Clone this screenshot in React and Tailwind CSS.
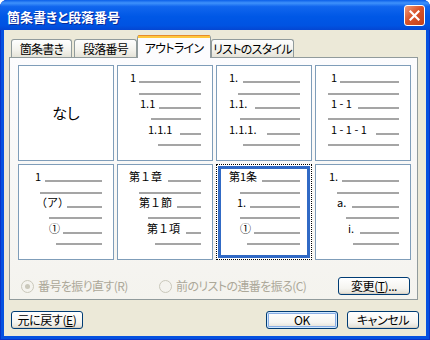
const heights = ["h-[17px]", "h-[12px]", "h-[14px]", "h-[11px]", "h-[15px]", "h-[11px]"]
const selHeights = ["h-[13px]", "h-[12px]", "h-[14px]", "h-[11px]", "h-[15px]", "h-[11px]"]

const cells = [
  { none: true },
  {
    rows: [
      { pl: "pl-[12px]", label: "1", w: "w-[9px]" },
      { pl: "pl-[21px]" },
      { pl: "pl-[22px]", label: "1.1", w: "w-[19px]" },
      { pl: "pl-[33px]" },
      { pl: "pl-[30px]", label: "1.1.1", w: "w-[32px]" },
      { pl: "pl-[40px]" },
    ],
  },
  {
    rows: [
      { pl: "pl-[12px]", label: "1.", w: "w-[14px]" },
      { pl: "pl-[21px]" },
      { pl: "pl-[12px]", label: "1.1.", w: "w-[26px]" },
      { pl: "pl-[23px]" },
      { pl: "pl-[12px]", label: "1.1.1.", w: "w-[38px]" },
      { pl: "pl-[26px]" },
    ],
  },
  {
    rows: [
      { pl: "pl-[15px]", label: "1", w: "w-[9px]" },
      { pl: "pl-[12px]" },
      { pl: "pl-[15px]", label: "1 - 1", w: "w-[27px]" },
      { pl: "pl-[12px]" },
      { pl: "pl-[15px]", label: "1 - 1 - 1", w: "w-[45px]" },
      { pl: "pl-[12px]" },
    ],
  },
  {
    rows: [
      { pl: "pl-[16px]", label: "1", w: "w-[10px]" },
      { pl: "pl-[21px]" },
      { pl: "pl-[17px]", label: "（ア）", w: "w-[31px]" },
      { pl: "pl-[30px]" },
      { pl: "pl-[30px]", label: "①", w: "w-[14px]" },
      { pl: "pl-[37px]" },
    ],
  },
  {
    rows: [
      { pl: "pl-[11px]", label: "第１章", w: "w-[39px]" },
      { pl: "pl-[21px]" },
      { pl: "pl-[21px]", label: "第１節", w: "w-[38px]" },
      { pl: "pl-[30px]" },
      { pl: "pl-[29px]", label: "第１項", w: "w-[39px]" },
      { pl: "pl-[37px]" },
    ],
  },
  {
    selected: true,
    rows: [
      { pl: "pl-[8px]", label: "第1条", w: "w-[33px]" },
      { pl: "pl-[19px]" },
      { pl: "pl-[16px]", label: "1.", w: "w-[13px]" },
      { pl: "pl-[19px]" },
      { pl: "pl-[19px]", label: "①", w: "w-[14px]" },
      { pl: "pl-[26px]" },
    ],
  },
  {
    rows: [
      { pl: "pl-[13px]", label: "1.", w: "w-[13px]" },
      { pl: "pl-[21px]" },
      { pl: "pl-[21px]", label: "a.", w: "w-[15px]" },
      { pl: "pl-[30px]" },
      { pl: "pl-[32px]", label: "i.", w: "w-[12px]" },
      { pl: "pl-[37px]" },
    ],
  },
]

function Lines({ rows, selected }) {
  const hs = selected ? selHeights : heights
  return (
    <div className={`flex flex-col ${selected ? "pr-[7px]" : "pr-[11px]"}`}>
      {rows.map((r, i) => (
        <div key={i} className={`flex items-end ${hs[i]} ${r.pl}`}>
          {r.label && (
            <span className={`${r.w} shrink-0 whitespace-nowrap text-[11px] leading-none text-black [font-feature-settings:normal]`}>
              {r.label}
            </span>
          )}
          <div className="h-[2px] flex-1 bg-[#a5a5a5]" />
        </div>
      ))}
    </div>
  )
}

function Cell({ cell }) {
  if (cell.none) {
    return (
      <div className="flex items-center justify-center border border-[#7f9db9] bg-white text-[15px] text-black">
        なし
      </div>
    )
  }
  if (cell.selected) {
    return (
      <div className="border border-dotted border-black bg-white p-[1px]">
        <div className="h-full border-[3px] border-[#316ac5] bg-white">
          <Lines rows={cell.rows} selected />
        </div>
      </div>
    )
  }
  return (
    <div className="border border-[#7f9db9] bg-white">
      <Lines rows={cell.rows} />
    </div>
  )
}

function XpButton({ children, def, className = "" }) {
  return (
    <div
      className={`flex h-[18px] w-[72px] items-center justify-center rounded-[3px] border border-[#003c74] bg-[linear-gradient(to_bottom,#ffffff,#f5f4f0_65%,#e2ded3)] text-[12px] leading-none tracking-[-0.4px] text-black ${
        def ? "shadow-[inset_0_0_0_1px_#cee7ff,inset_0_0_0_2px_#89ade4]" : "shadow-[inset_0_-1px_0_#d6d0c5]"
      } ${className}`}
    >
      {children}
    </div>
  )
}

function Radio({ checked, label }) {
  return (
    <div className="flex items-center gap-[4px]">
      <div className="flex h-[13px] w-[13px] items-center justify-center rounded-full border border-[#cac8bb] bg-[#f4f3ee]">
        {checked && <div className="h-[5px] w-[5px] rounded-full bg-[#cac8bb]" />}
      </div>
      <span className="whitespace-nowrap text-[12px] leading-none tracking-[-0.6px] text-[#aca899]">{label}</span>
    </div>
  )
}

const tabIdle =
  "mb-[1px] flex h-[18px] items-center justify-center whitespace-nowrap rounded-t-[3px] border border-b-0 border-[#919b9c] bg-[linear-gradient(to_bottom,#fefefe,#f3f2ec_60%,#e5e3d8)] leading-none tracking-[-0.7px]"

export default function App() {
  return (
    <div className="flex h-[340px] w-[430px] flex-col overflow-hidden rounded-t-[7px] bg-[#0651e0] font-['Noto_Sans_CJK_JP',sans-serif] [font-feature-settings:'palt'] shadow-[inset_0_0_0_1px_#0834c8]">
      {/* title bar */}
      <div className="flex h-[30px] shrink-0 items-center justify-between bg-[linear-gradient(to_bottom,#0b5fe9_0%,#3f92fb_10%,#1166ee_22%,#0058e6_55%,#0053e2_85%,#0446d2_100%)] pl-[7px] pr-[5px]">
        <span className="mt-[2px] text-[13px] font-bold leading-none text-white [text-shadow:1px_1px_0_#0a2a9a]">
          箇条書きと段落番号
        </span>
        <div className="flex h-[21px] w-[21px] items-center justify-center rounded-[3px] border border-white bg-[linear-gradient(135deg,#ee9c7c,#d9542b_45%,#c2401c)]">
          <svg width="11" height="11" viewBox="0 0 11 11">
            <path d="M1.5 1.5 L9.5 9.5 M9.5 1.5 L1.5 9.5" stroke="white" strokeWidth="2.2" strokeLinecap="square" />
          </svg>
        </div>
      </div>

      {/* client */}
      <div className="mx-[4px] mb-[4px] flex flex-1 flex-col bg-[#ece9d8] px-[5px] pt-[5px] text-[12px] text-black">
        {/* tabs */}
        <div className="relative z-10 -mb-[1px] flex h-[23px] items-end pl-[2px]">
          <div className={`${tabIdle} w-[61px]`}>箇条書き</div>
          <div className={`${tabIdle} ml-[2px] w-[63px]`}>段落番号</div>
          <div className="flex h-[23px] w-[74px] flex-col rounded-t-[3px] border-x border-[#919b9c] bg-[#fcfcfe]">
            <div className="h-[1px] rounded-t-[3px] bg-[#e68b2c]" />
            <div className="h-[2px] bg-[#ffc73c]" />
            <div className="flex flex-1 items-center justify-center whitespace-nowrap pb-[1px] leading-none tracking-[-0.7px]">
              アウトライン
            </div>
          </div>
          <div className={`${tabIdle} w-[83px]`}>リストのスタイル</div>
        </div>

        {/* panel */}
        <div className="flex h-[243px] w-[409px] flex-col border border-[#919b9c] bg-[linear-gradient(to_bottom,#fcfcfe,#f4f3ee)] pl-[8px] pr-[7px] pt-[7px]">
          <div className="grid auto-rows-[96px] grid-cols-[repeat(4,96px)] gap-[3px]">
            {cells.map((c, i) => (
              <Cell key={i} cell={c} />
            ))}
          </div>
          <div className="mt-[17px] flex h-[18px] items-center justify-between pl-[3px]">
            <div className="flex items-center">
              <div className="w-[138px]">
                <Radio checked label="番号を振り直す(R)" />
              </div>
              <Radio label="前のリストの連番を振る(C)" />
            </div>
            <XpButton>
              変更(<u>T</u>)...
            </XpButton>
          </div>
        </div>

        {/* bottom buttons */}
        <div className="mt-[11px] flex items-center justify-between pl-[2px] pr-[2px]">
          <XpButton>
            元に戻す(<u>E</u>)
          </XpButton>
          <div className="flex gap-[9px]">
            <XpButton def>OK</XpButton>
            <XpButton className="w-[71px]">キャンセル</XpButton>
          </div>
        </div>
      </div>
    </div>
  )
}
